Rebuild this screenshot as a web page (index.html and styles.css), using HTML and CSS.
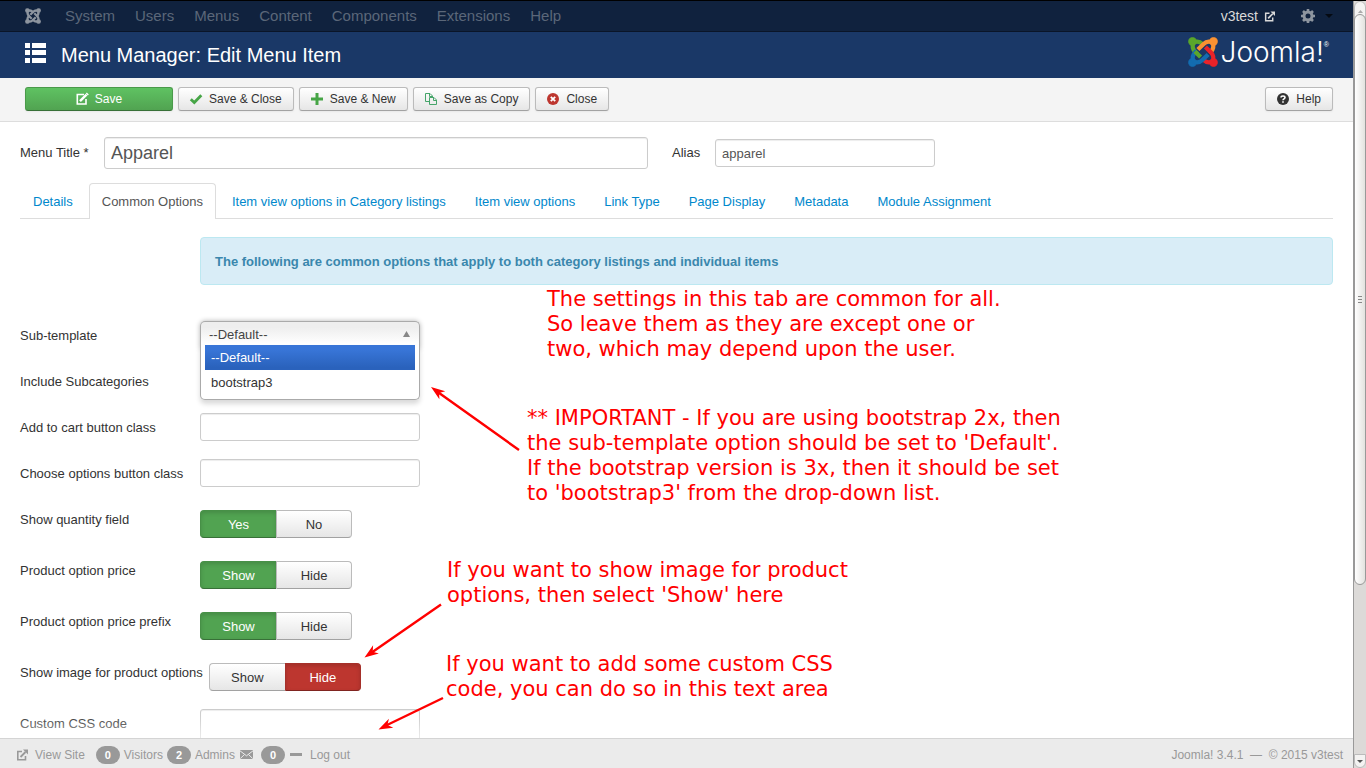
FILE: index.html
```html
<!DOCTYPE html>
<html lang="en">
<head>
<meta charset="utf-8">
<title>Menu Manager: Edit Menu Item</title>
<link rel="stylesheet" href="styles.css">
</head>
<body>
<svg class="defs" aria-hidden="true">
  <g id="limb">
    <circle cx="15" cy="15" r="14"/>
    <path d="M18 18C13 32 15 40 23 48L42 67M18 18C32 13 40 15 48 23L54 29" fill="none" stroke-width="14"/>
  </g>
  <symbol id="external" viewBox="0 0 12 12">
    <path d="M6 2.5H1.8V10.7H9.5V7" fill="none" stroke="currentColor" stroke-width="1.6"/>
    <path d="M4.5 8L9.5 3" fill="none" stroke="currentColor" stroke-width="1.8"/>
    <path d="M7 .5H12V5.5Z" fill="currentColor"/>
  </symbol>
</svg>
<div class="window">
  <div class="page">
    <nav class="navbar">
      <a href="#" class="brand" aria-label="Joomla">
        <svg width="16" height="16" viewBox="0 0 100 100" fill="#8d959f" stroke="#8d959f">
          <use href="#limb"/><use href="#limb" transform="rotate(90 50 50)"/><use href="#limb" transform="rotate(180 50 50)"/><use href="#limb" transform="rotate(270 50 50)"/>
        </svg>
      </a>
      <a href="#">System</a><a href="#">Users</a><a href="#">Menus</a><a href="#">Content</a><a href="#">Components</a><a href="#">Extensions</a><a href="#">Help</a>
      <a href="#" class="site">v3test <svg width="11" height="11"><use href="#external"/></svg></a>
      <a href="#" class="cog" aria-label="Settings">
        <svg width="14" height="14" viewBox="0 0 14 14"><circle cx="7" cy="7" r="4" fill="none" stroke="#8d959f" stroke-width="3"/><path d="M7 0V3M7 11V14M0 7H3M11 7H14M2 2L4 4M10 10L12 12M2 12L4 10M10 4L12 2" stroke="#8d959f" stroke-width="2.6"/></svg>
        <svg width="8" height="4" viewBox="0 0 8 4"><path d="M0 0H8L4 4Z" fill="#050a12"/></svg>
      </a>
    </nav>
    <header class="header">
      <svg width="21" height="20" viewBox="0 0 21 20" fill="#fff"><path d="M0 0H5V5H0ZM7 0H21V5H7ZM0 7H5V12H0ZM7 7H21V12H7ZM0 15H5V20H0ZM7 15H21V20H7Z"/></svg>
      <h1>Menu Manager: Edit Menu Item</h1>
      <div class="logo">
        <svg width="30" height="30" viewBox="0 0 100 100">
          <use href="#limb" fill="#5aa62b" stroke="#5aa62b"/>
          <use href="#limb" fill="#fa9232" stroke="#fa9232" transform="rotate(90 50 50)"/>
          <use href="#limb" fill="#ea2329" stroke="#ea2329" transform="rotate(180 50 50)"/>
          <use href="#limb" fill="#136cb0" stroke="#136cb0" transform="rotate(270 50 50)"/>
          <path d="M23 48L32 57" fill="none" stroke="#5aa62b" stroke-width="14"/>
        </svg>
        <span class="wordmark">Joomla!</span><sup>®</sup>
      </div>
    </header>
    <div class="toolbar">
      <button class="btn btn-save"><svg width="14" height="14" viewBox="0 0 14 14" fill="none" stroke="#fff"><path d="M9 2.5H2.3V12H11V7" stroke-width="1.6"/><path d="M5 9.2L11.5 2.7" stroke-width="2.4"/><path d="M11.3 1L13.3 3" stroke-width="1.4"/></svg>Save</button>
      <button class="btn"><svg width="14" height="14" viewBox="0 0 14 14"><path d="M1.8 7.2L5.3 10.5L12.3 3.2" fill="none" stroke="#46a546" stroke-width="2.8"/></svg>Save &amp; Close</button>
      <button class="btn"><svg width="14" height="14" viewBox="0 0 14 14"><path d="M7 1V13M1 7H13" stroke="#46a546" stroke-width="3"/></svg>Save &amp; New</button>
      <button class="btn"><svg width="14" height="14" viewBox="0 0 14 14" fill="none" stroke="#46a56a"><path d="M5.5 9.5H1.500V1.500H6L8.500 4V5M5.500 1.500V4.500H8.500M5.500 5.500H10L12.500 8V12.500H5.500ZM9.500 5.500V8.500H12.500"/></svg>Save as Copy</button>
      <button class="btn"><svg width="14" height="14" viewBox="0 0 14 14"><circle cx="7" cy="7" r="6" fill="#bd362f"/><path d="M4.8 4.8L9.2 9.2M9.2 4.8L4.8 9.2" stroke="#fff" stroke-width="1.8"/></svg>Close</button>
      <button class="btn btn-help"><svg width="14" height="14" viewBox="0 0 14 14"><circle cx="7" cy="7" r="6" fill="#333"/><path d="M5 5.6C5 3.4 9 3.4 9 5.6C9 7 7 6.9 7 8.3" fill="none" stroke="#fff" stroke-width="1.6"/><path d="M6.2 9.3H7.8V10.8H6.2Z" fill="#fff"/></svg>Help</button>
    </div>
    <main class="content">
      <div class="titles">
        <label for="title">Menu Title *</label><input id="title" class="title-input" value="Apparel">
        <label for="alias" class="alias-label">Alias</label><input id="alias" class="field" value="apparel">
      </div>
      <div class="tabs">
        <a href="#">Details</a><a href="#" class="active">Common Options</a><a href="#">Item view options in Category listings</a><a href="#">Item view options</a><a href="#">Link Type</a><a href="#">Page Display</a><a href="#">Metadata</a><a href="#">Module Assignment</a>
      </div>
      <div class="alert">The following are common options that apply to both category listings and individual items</div>
      <div class="rows">
        <div class="row"><label for="sub">Sub-template</label>
          <div class="chosen">
            <select id="sub"><option>--Default--</option><option>bootstrap3</option></select>
            <svg class="caret" width="7" height="6" viewBox="0 0 7 6"><path d="M0 6L3.5 0L7 6Z" fill="#888"/></svg>
            <ul class="drop"><li class="on">--Default--</li><li>bootstrap3</li></ul>
          </div>
        </div>
        <div class="row"><label for="inc">Include Subcategories</label><select id="inc" class="field"></select></div>
        <div class="row"><label for="cart">Add to cart button class</label><input id="cart" class="field"></div>
        <div class="row"><label for="choose">Choose options button class</label><input id="choose" class="field"></div>
        <div class="row radio"><label id="l1">Show quantity field</label><div class="group" role="group" aria-labelledby="l1"><button class="yes">Yes</button><button>No</button></div></div>
        <div class="row radio"><label id="l2">Product option price</label><div class="group" role="group" aria-labelledby="l2"><button class="yes">Show</button><button>Hide</button></div></div>
        <div class="row radio"><label id="l3">Product option price prefix</label><div class="group" role="group" aria-labelledby="l3"><button class="yes">Show</button><button>Hide</button></div></div>
        <div class="row radio"><label id="l4">Show image for product options</label><div class="group" role="group" aria-labelledby="l4"><button>Show</button><button class="no">Hide</button></div></div>
        <div class="row"><label for="css">Custom CSS code</label><textarea id="css" class="field area"></textarea></div>
      </div>
    </main>
    <footer class="status">
      <a href="#" class="view"><svg width="12" height="12"><use href="#external"/></svg>View Site</a>
      <span class="badge">0</span><span>Visitors</span>
      <span class="badge">2</span><span>Admins</span>
      <svg width="13" height="9" viewBox="0 0 13 9"><path d="M0 0H13V9H0Z" fill="#999"/><path d="M0 .8L6.5 5.8L13 .8M.3 8.5L4.5 4.5M12.7 8.5L8.5 4.5" fill="none" stroke="#ebebeb"/></svg>
      <span class="badge mail">0</span>
      <a href="#" class="logout"><svg width="12" height="3"><path d="M0 0H12V3H0Z" fill="#999"/></svg>Log out</a>
      <span class="version">Joomla! 3.4.1 &nbsp;—&nbsp; © 2015 v3test</span>
    </footer>
    <div class="notes">
      <svg class="arrows" width="540" height="768" viewBox="0 0 540 768" fill="#f00" stroke="#f00">
        <path d="M519 450L437 391.5M441 604.5L371 653M443 698L385 726" stroke-width="2.4" fill="none"/>
        <path d="M0 0L14 -5L10 0L14 5Z" stroke="none" transform="translate(431 387) rotate(36)"/>
        <path d="M0 0L14 -5L10 0L14 5Z" stroke="none" transform="translate(364.5 657.5) rotate(-35)"/>
        <path d="M0 0L14 -5L10 0L14 5Z" stroke="none" transform="translate(378.5 729.5) rotate(-26)"/>
      </svg>
      <p class="note n1">The settings in this tab are common for all.<br>So leave them as they are except one or<br>two, which may depend upon the user.</p>
      <p class="note n2">** IMPORTANT - If you are using bootstrap 2x, then<br>the sub-template option should be set to 'Default'.<br>If the bootstrap version is 3x, then it should be set<br>to 'bootstrap3' from the drop-down list.</p>
      <p class="note n3">If you want to show image for product<br>options, then select 'Show' here</p>
      <p class="note n4">If you want to add some custom CSS<br>code, you can do so in this text area</p>
    </div>
  </div>
  <div class="scrollbar" aria-hidden="true">
    <div class="cap"><svg width="5" height="3" viewBox="0 0 5 3"><path d="M0 3L2.5 0L5 3Z" fill="#aaa"/></svg></div>
    <div class="thumb"><i></i><i></i><i></i></div>
    <div class="track"></div>
    <div class="cap end"><svg width="6" height="3" viewBox="0 0 6 3"><path d="M0 0H6L3 3Z" fill="#555"/></svg></div>
  </div>
</div>
</body>
</html>
```
FILE: styles.css
```css
* { box-sizing: border-box; }
body { margin: 0; font: 13px/18px "Liberation Sans", Arial, sans-serif; color: #333; background: #fff; }
a { color: #08c; text-decoration: none; }
button, input, select, textarea { font: inherit; color: inherit; margin: 0; }
.defs { position: absolute; width: 0; height: 0; }
.window { display: flex; height: 100vh; overflow: hidden; border-top: 1px solid #000; }
.page { position: relative; flex: 1; min-width: 0; display: flex; flex-direction: column; }

.navbar { display: flex; align-items: center; height: 31px; flex: none; padding: 0 20px 0 25px; background: #10223e; border-bottom: 1px solid #0a1528; font-size: 15px; }
.navbar a { padding: 0 10px; color: #5b6779; }
.navbar .brand { padding: 0 14px 0 0; display: flex; }
.navbar .site { display: flex; align-items: center; gap: 6px; margin-left: auto; padding: 0; color: #d9d9d9; font-size: 14px; }
.navbar .cog { display: flex; align-items: center; gap: 10px; padding: 0 0 0 26px; }

.header { display: flex; align-items: center; height: 46px; flex: none; padding: 0 24px 0 25px; background: #1a3867; color: #fff; }
.header h1 { margin: 0 0 0 15px; font-size: 20px; font-weight: normal; line-height: 24px; }
.header > svg { margin-bottom: 4px; }
.logo { display: flex; align-items: center; margin-left: auto; padding-bottom: 6px; }
.wordmark { margin-left: 3px; font: 300 28px/30px Inter, sans-serif; }
.logo sup { font-size: 7px; line-height: 7px; align-self: flex-start; margin-top: 4px; }

.toolbar { display: flex; gap: 5px; flex: none; height: 44px; padding: 9px 20px 0 25px; background: #f4f4f4; border-bottom: 1px solid #ddd; }
.btn { display: flex; align-items: center; justify-content: center; gap: 6px; height: 24px; padding: 0 11px 0 10px; font-size: 12px; border: 1px solid #bbb; border-bottom-color: #a2a2a2; border-radius: 3px; background: linear-gradient(#fff, #e6e6e6); box-shadow: 0 1px 2px rgba(0, 0, 0, .05); }
.btn-save { width: 148px; color: #fff; border-color: #4a9a4a; border-bottom-color: #387038; background: linear-gradient(#5fc262, #51a351); }
.btn-help { margin-left: auto; }

.content { flex: 1; min-height: 0; overflow: hidden; padding: 15px 20px 0; }
.titles { display: flex; align-items: center; }
.titles label { width: 84px; }
.titles .alias-label { width: 43px; margin-left: 24px; }
.title-input, .field { border: 1px solid #ccc; border-radius: 3px; background: #fff; color: #555; box-shadow: inset 0 1px 1px rgba(0, 0, 0, .075); }
.title-input { width: 544px; height: 32px; padding: 0 6px; font-size: 18px; }
.field { width: 220px; height: 28px; padding: 0 6px; }
select.field { appearance: none; }
.area { height: 70px; resize: none; }

.tabs { display: flex; gap: 3px; margin-top: 14px; height: 36px; border-bottom: 1px solid #ddd; }
.tabs a { height: 36px; padding: 9px 12px 0; border: 1px solid transparent; border-bottom: 0; }
.tabs .active { color: #555; border-color: #ddd; border-radius: 4px 4px 0 0; background: #fff; }
.alert { margin: 18px 0 36px 180px; padding: 15px 14px 13px; border: 1px solid #bce8f1; border-radius: 4px; background: #d9edf7; color: #3a87ad; font-weight: bold; }

.rows { display: flex; flex-direction: column; gap: 18px; }
.row { display: flex; align-items: flex-start; gap: 6px; }
.row label { min-width: 174px; padding-top: 6px; white-space: nowrap; }
.radio .group { margin-top: 5px; }
.group { display: flex; }
.group button { width: 76px; height: 28px; padding: 2px 0 0; border: 1px solid #bbb; border-bottom-color: #a2a2a2; background: linear-gradient(#fff, #e6e6e6); }
.group button:first-child { border-radius: 4px 0 0 4px; border-right-width: 0; }
.group button:last-child { border-radius: 0 4px 4px 0; }
.group .yes { background: #51a351; border-color: #479047 #479047 #387038; color: #fff; box-shadow: inset 0 2px 4px rgba(0, 0, 0, .15); }
.group .no { background: #bd362f; border-color: #a5302a #a5302a #802420; color: #fff; box-shadow: inset 0 2px 4px rgba(0, 0, 0, .15); }

.chosen { position: relative; width: 220px; height: 28px; border: 1px solid #aaa; border-bottom: 0; border-radius: 5px 5px 0 0; background: linear-gradient(#eee 20%, #fff 80%); box-shadow: 0 0 5px rgba(0, 0, 0, .3); }
.chosen select { width: 100%; height: 26px; padding: 0 8px; border: 0; background: none; appearance: none; color: #444; }
.caret { position: absolute; right: 9px; top: 9px; }
.drop { position: absolute; z-index: 2; left: -1px; right: -1px; top: 23px; margin: 0; padding: 0 4px 4px; list-style: none; background: #fff; border: 1px solid #aaa; border-top: 0; border-radius: 0 0 5px 5px; box-shadow: 0 4px 5px rgba(0, 0, 0, .15); }
.drop li { height: 25px; padding: 0 6px; line-height: 25px; color: #333; }
.drop .on { color: #fff; background: linear-gradient(#3875d7 20%, #2a62bc 90%); }

.status { position: relative; display: flex; align-items: center; flex: none; height: 30px; padding: 2px 10px 0 16px; font-size: 12px; color: #999; background: #ebebeb; border-top: 1px solid #d4d4d4; box-shadow: 0 -6px 16px 6px rgba(255, 255, 255, .6); }
.status a { display: flex; align-items: center; color: #999; }
.view { gap: 7px; margin-right: 11px; }
.badge { margin: 0 4px; min-width: 24px; height: 18px; border-radius: 9px; background: #999; color: #fff; font-size: 11px; font-weight: bold; line-height: 18px; text-align: center; }
.view + .badge { margin-left: 0; }
.status > svg { margin-left: 5px; }
.mail { margin-left: 8px; margin-right: 5px; }
.logout { gap: 8px; }
.version { margin-left: auto; }

.notes { position: absolute; inset: -1px 0 0; z-index: 3; pointer-events: none; color: #f00; font: 21px/25px "DejaVu Sans", sans-serif; }
.arrows { position: absolute; left: 0; top: 0; }
.note { position: absolute; margin: 0; white-space: nowrap; }
.n1 { left: 547px; top: 287px; }
.n2 { left: 527px; top: 406px; }
.n3 { left: 447px; top: 558px; }
.n4 { left: 446px; top: 652px; }

.scrollbar { position: relative; z-index: 1; flex: none; width: 13px; display: flex; flex-direction: column; border-left: 1px solid #999; background: #dcdad8; }
.cap { height: 20px; flex: none; display: flex; align-items: center; justify-content: center; border: 1px solid #bbb; border-radius: 6px 6px 0 0; background: #f4f3f2; }
.end { height: 14px; border-radius: 0 0 6px 6px; }
.thumb { flex: 571; margin-top: -7px; display: flex; flex-direction: column; justify-content: center; align-items: center; gap: 2px; border: 1px solid #999; border-radius: 6px; background: linear-gradient(90deg, #fff, #e3e2df); }
.thumb i { width: 4px; height: 1px; background: #888; }
.track { flex: 169; }
```
